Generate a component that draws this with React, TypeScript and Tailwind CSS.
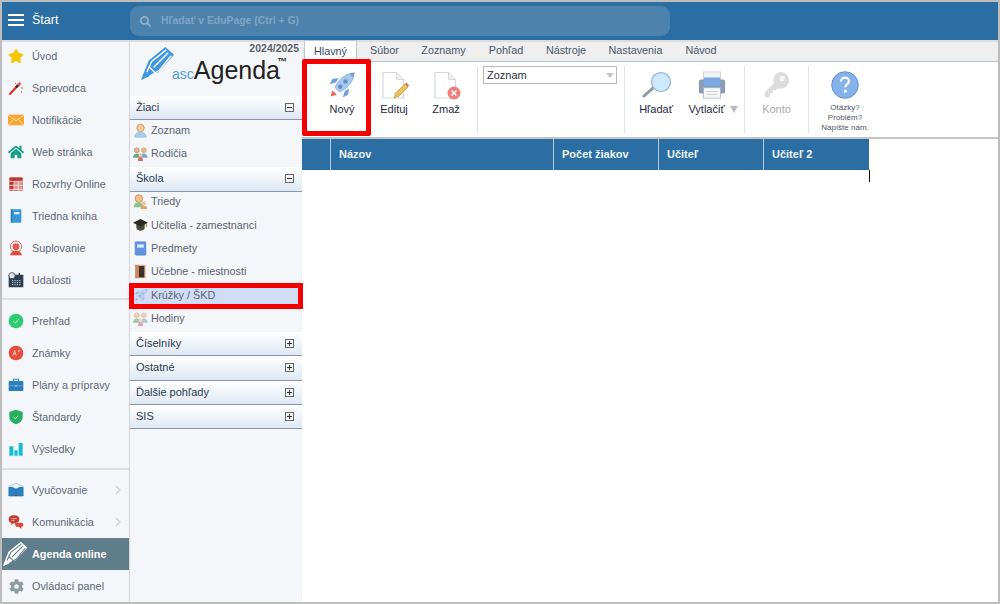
import React from 'react';
import { FaCog, FaHome, FaSearch, FaStar } from 'react-icons/fa';

const font = { fontFamily: '"Liberation Sans", Arial, sans-serif' };

// ---- sidebar icons ----
const Wand = () => (
  <svg width="16" height="16" viewBox="0 0 24 24">
    <path d="M3 21 L15 8" stroke="#d9352c" strokeWidth="3.4" strokeLinecap="round" />
    <path d="M12 11 L15 8" stroke="#2b2b2b" strokeWidth="3.4" />
    <path d="M17 2l1 3 3 1-3 1-1 3-1-3-3-1 3-1z" fill="#e8453c" />
    <circle cx="21" cy="12" r="1.2" fill="#e8453c" /><circle cx="11" cy="5" r="1" fill="#e8453c" /><circle cx="20" cy="18" r="1" fill="#e8453c" />
  </svg>
);
const Mail = () => (
  <svg width="16" height="16" viewBox="0 0 24 24">
    <rect x="0" y="4" width="24" height="16" fill="#f5a732" />
    <path d="M0 5 L12 13 L24 5 M0 20 L8 11 M24 20 L16 11" stroke="#fde6bd" strokeWidth="1.2" fill="none" />
  </svg>
);
const Timetable = () => (
  <svg width="16" height="16" viewBox="0 0 24 24">
    <rect x="2" y="2" width="20" height="20" fill="#b8362e" />
    <path d="M9 8v14M15.500 8v14M2 8h20M2 14h20M2 20h20" stroke="#f4dcda" strokeWidth="1.300" />
    <rect x="9.500" y="8.500" width="12" height="13" fill="#f7e9e7" opacity="0.55" />
  </svg>
);
const ClassBook = () => (
  <svg width="16" height="16" viewBox="0 0 24 24">
    <rect x="5" y="2" width="15" height="20" rx="1.5" fill="#3498db" />
    <rect x="4" y="2" width="2.5" height="20" fill="#2980b9" />
    <rect x="9" y="6" width="8" height="3.5" fill="#d5ecfa" />
  </svg>
);
const Substitute = () => (
  <svg width="16" height="16" viewBox="0 0 24 24">
    <circle cx="12" cy="10" r="8.5" fill="none" stroke="#e8574a" strokeWidth="1.300" />
    <circle cx="12" cy="10" r="5" fill="#e8574a" />
    <path d="M3 23c1-5 5-7 9-7s8 2 9 7z" fill="#e8453c" />
  </svg>
);
const Events = () => (
  <svg width="16" height="16" viewBox="0 0 24 24">
    <rect x="1" y="4" width="22" height="19" rx="1" fill="#2c3e50" />
    <path d="M6 13h14M6 16h14M6 19h14" stroke="#dfe6ec" strokeWidth="1.400" strokeDasharray="1.800 1.800" />
    <circle cx="6" cy="5.500" r="4.600" fill="#eef1f4" stroke="#2c3e50" strokeWidth="1.200" />
    <path d="M6 5.500l2-2" stroke="#2c3e50" strokeWidth="1" />
    <rect x="16" y="1.500" width="2" height="4" fill="#2c3e50" />
  </svg>
);
const Check = () => (
  <svg width="16" height="16" viewBox="0 0 24 24">
    <circle cx="12" cy="12" r="11" fill="#2ecc71" />
    <path d="M8 12.500l3 2.500 5-5.500" fill="none" stroke="#e9fbf0" strokeWidth="1.300" />
  </svg>
);
const Grades = () => (
  <svg width="16" height="16" viewBox="0 0 24 24">
    <circle cx="12" cy="12" r="11" fill="#e74c3c" />
    <path d="M7.500 16L10 8.500l2.500 7.500M8.500 13.500h3M15 8.500h3M16.500 7v3" fill="none" stroke="#fbe0dd" strokeWidth="1.200" />
  </svg>
);
const Briefcase = () => (
  <svg width="16" height="16" viewBox="0 0 24 24">
    <path d="M8 6V3.500h8V6" fill="none" stroke="#2a7fb8" strokeWidth="1.600" />
    <rect x="1" y="6" width="22" height="15" rx="1" fill="#2a7fb8" />
    <path d="M1 13h22" stroke="#8cc2e4" strokeWidth="0.800" />
    <circle cx="12" cy="13.500" r="1.200" fill="#d7ebf7" />
  </svg>
);
const Shield = () => (
  <svg width="16" height="16" viewBox="0 0 24 24">
    <path d="M12 1l10 3.500V12c0 5-4 9-10 11C6 21 2 17 2 12V4.500z" fill="#27ae60" />
    <path d="M8.500 12l2.500 2.500 4.500-4.500" fill="none" stroke="#e6f8ed" strokeWidth="1.300" />
  </svg>
);
const Bars = () => (
  <svg width="16" height="16" viewBox="0 0 24 24">
    <rect x="2" y="8" width="6" height="14" fill="#15bcd6" />
    <rect x="9.500" y="14" width="5" height="8" fill="#15bcd6" />
    <rect x="16" y="3" width="6" height="19" fill="#15bcd6" />
  </svg>
);
const OpenBook = () => (
  <svg width="16" height="16" viewBox="0 0 24 24">
    <path d="M12 2L1 7v14h22V7z" fill="none" stroke="#8fc1e3" strokeWidth="1.200" />
    <path d="M1 8c4-1 8 0 11 2v11c-3-2-7-2-11-1zM23 8c-4-1-8 0-11 2v11c3-2 7-2 11-1z" fill="#2a80bd" />
    <path d="M1 20.500h22" stroke="#15507d" strokeWidth="1.300" />
  </svg>
);
const Chat = () => (
  <svg width="16" height="16" viewBox="0 0 24 24">
    <path d="M10 14l8-1 2 0c2 0 3 1 3 3s-1 3-3 3v3l-4-3h-4z" fill="#d9453a" />
    <path d="M9 2c5 0 8 2 8 6s-3 6-8 6H8l-3 3v-3.500C2 12.500 1 10.500 1 8c0-4 3-6 8-6z" fill="#bf3b30" />
    <path d="M5 7h8M5 10h5" stroke="#f3cdc9" strokeWidth="1.200" />
  </svg>
);
const Pen = ({ color, slit }: { color: string; slit: string }) => (
  <svg width="100%" height="100%" viewBox="0 0 36 36">
    <path d="M1 35L9 15 26 1 35 9 19 27z" fill={color} />
    <path d="M7 27L12 16 27 4M10 31L20 25 32 10M9 21l8 8M14 22L29 7" fill="none" stroke={slit} strokeWidth="1.500" />
  </svg>
);
const Chevron = () => (
  <svg width="6" height="10" viewBox="0 0 6 10">
    <path d="M1 1l4 4-4 4" fill="none" stroke="#c9ced4" strokeWidth="1.200" />
  </svg>
);

// ---- agenda list icons ----
const Person = ({ hair = '#e0a066', body = '#a9cdf0' }: { hair?: string; body?: string }) => (
  <svg width="15" height="15" viewBox="0 0 18 18">
    <circle cx="9" cy="6" r="4.500" fill="#f2c9a5" stroke={hair} strokeWidth="1.200" />
    <path d="M2 17c0-4 3-6 7-6s7 2 7 6z" fill={body} stroke="#7fb0e0" strokeWidth="0.600" />
  </svg>
);
const Group = ({ pale = false }: { pale?: boolean }) => (
  <svg width="15" height="15" viewBox="0 0 18 18" opacity={pale ? 0.6 : 1}>
    <circle cx="4.500" cy="5" r="3" fill="#e9b88a" stroke="#8d6a4a" strokeWidth="0.500" />
    <path d="M0 14c0-3 2-5 4.500-5S9 11 9 14z" fill="#6aa57b" />
    <circle cx="13" cy="5" r="3" fill="#e9b88a" stroke="#c18b45" strokeWidth="0.500" />
    <path d="M8.500 14c0-3 2-5 4.500-5s4.500 2 4.500 5z" fill="#7da5d8" />
    <circle cx="9" cy="11" r="2.200" fill="#f0c8a5" />
    <path d="M6 18c0-3 1-4.500 3-4.500s3 1.500 3 4.500z" fill="#d96a6a" />
  </svg>
);
const Classes = () => (
  <svg width="15" height="15" viewBox="0 0 18 18">
    <circle cx="7" cy="5.500" r="4.500" fill="#f2c18f" stroke="#c6873f" strokeWidth="1" />
    <path d="M1 16c0-4 2-6 6-6s6 2 6 6z" fill="#8fc38f" />
    <circle cx="13" cy="11" r="2.600" fill="#f2c9a5" />
    <path d="M9 18c0-3 1.500-4 4-4s4 1 4 4z" fill="#e6a15e" />
  </svg>
);
const Cap = () => (
  <svg width="15" height="15" viewBox="0 0 18 18">
    <path d="M4 8v5c0 2 2.500 3.500 5 3.500s5-1.500 5-3.500V8z" fill="#4a4a3c" />
    <path d="M0 7l9-4.500L18 7l-9 4.500z" fill="#2a2a22" />
    <path d="M16 8v4" stroke="#8a6d2f" strokeWidth="1" />
  </svg>
);
const Subject = () => (
  <svg width="15" height="15" viewBox="0 0 18 18">
    <rect x="2.500" y="1" width="13" height="16" rx="1" fill="#5e93dd" stroke="#4a7cc4" strokeWidth="0.600" />
    <rect x="5" y="4" width="8" height="4" fill="#d9e8fa" />
  </svg>
);
const Door = () => (
  <svg width="15" height="15" viewBox="0 0 18 18">
    <rect x="3" y="1" width="12" height="16" fill="#d9a67e" />
    <rect x="7" y="2.500" width="6.500" height="13.500" fill="#3d2f28" />
    <path d="M3 1l4 1.500V16l-4 1z" fill="#c98a5e" stroke="#a9683f" strokeWidth="0.400" />
  </svg>
);
const Rocket = ({ size, pale = false }: { size: number; pale?: boolean }) => (
  <svg width={size} height={size} viewBox="0 0 32 32" opacity={pale ? 0.55 : 1}>
    <path d="M3 29l2-7 5 5z" fill="#e8675c" />
    <path d="M9 13L2 15l3-6 7-1zM19 23l-2 7 6-3 1-7z" fill="#6f9fd8" />
    <path d="M8 19C12 9 20 3 30 2c-1 10-7 18-17 22z" fill="#a8c9ee" stroke="#7ea6d8" strokeWidth="0.800" />
    <path d="M24 2.800c1 .5 3 2.500 5 5L30 2z" fill="#6f9fd8" />
    <circle cx="20" cy="12" r="2.500" fill="#5f90cf" />
    <circle cx="14" cy="18" r="2.500" fill="#5f90cf" />
  </svg>
);

// ---- ribbon icons ----
const Sheet = ({ children }: { children?: React.ReactNode }) => (
  <svg width="30" height="30" viewBox="0 0 30 30">
    <path d="M4 2.500h13.500l7 7V28H4z" fill="#fff" stroke="#d5d9dd" strokeWidth="1.200" />
    <path d="M17.500 2.500v7h7" fill="#eef0f2" stroke="#d5d9dd" strokeWidth="1" />
    {children}
  </svg>
);
const Lens = () => (
  <svg width="32" height="30" viewBox="0 0 32 30">
    <path d="M4 26l9-8" stroke="#8d979f" strokeWidth="3" strokeLinecap="round" />
    <circle cx="21" cy="12" r="9.500" fill="#cfe8fc" stroke="#8fb6d4" strokeWidth="1.200" />
  </svg>
);
const Printer = () => (
  <svg width="28" height="28" viewBox="0 0 30 30">
    <rect x="6" y="1" width="18" height="10" fill="#f2f3f5" stroke="#c6cbd2" strokeWidth="0.800" />
    <rect x="1" y="9" width="28" height="15" rx="2" fill="#8b9cb5" />
    <rect x="6" y="7" width="18" height="9" rx="1" fill="#7ba7e3" />
    <rect x="6" y="18" width="18" height="11" fill="#f8f9fa" stroke="#a8afba" strokeWidth="0.800" />
    <path d="M9 22h12M9 25h12" stroke="#c5cad1" strokeWidth="1" />
  </svg>
);
const Key = () => (
  <svg width="28" height="28" viewBox="0 0 28 30">
    <path d="M18 1a9 9 0 0 1 0 18c-1 0-2-.2-3-.6L12 21h-2.500v2.500H7V26l-2.500 2L0.800 28l.2-5L10.600 13c-.4-1-.6-2-.6-3a9 9 0 0 1 8-9z" fill="#dcdcdc" />
    <circle cx="19.500" cy="8" r="2.800" fill="#f6f6f6" />
  </svg>
);
const Help = () => (
  <svg width="28" height="28" viewBox="0 0 28 28">
    <circle cx="14" cy="14" r="13.300" fill="#86b2ec" stroke="#5e8dcb" strokeWidth="0.900" />
    <path d="M10 10.500c0-2.500 2-3.800 4-3.800s4 1.300 4 3.500c0 3-3.700 2.900-3.700 6" fill="none" stroke="#fff" strokeWidth="2.300" />
    <rect x="12.900" y="18.800" width="2.800" height="2.800" fill="#fff" />
  </svg>
);

type SideEntry = { label: string; icon: React.ReactNode; arrow?: boolean; active?: boolean };

const sideTop: SideEntry[] = [
  { label: 'Úvod', icon: <FaStar size={16} color="#f7c600" /> },
  { label: 'Sprievodca', icon: <Wand /> },
  { label: 'Notifikácie', icon: <Mail /> },
  { label: 'Web stránka', icon: <FaHome size={16} color="#16a085" /> },
  { label: 'Rozvrhy Online', icon: <Timetable /> },
  { label: 'Triedna kniha', icon: <ClassBook /> },
  { label: 'Suplovanie', icon: <Substitute /> },
  { label: 'Udalosti', icon: <Events /> },
];
const sideMid: SideEntry[] = [
  { label: 'Prehľad', icon: <Check /> },
  { label: 'Známky', icon: <Grades /> },
  { label: 'Plány a prípravy', icon: <Briefcase /> },
  { label: 'Štandardy', icon: <Shield /> },
  { label: 'Výsledky', icon: <Bars /> },
];
const sideBottom: SideEntry[] = [
  { label: 'Vyučovanie', icon: <OpenBook />, arrow: true },
  { label: 'Komunikácia', icon: <Chat />, arrow: true },
  { label: 'Agenda online', icon: <div className="w-[26px] h-[26px] -ml-[2px]"><Pen color="#ffffff" slit="#607d8b" /></div>, active: true },
  { label: 'Ovládací panel', icon: <FaCog size={15} color="#8d9c9c" /> },
];

const SideItem = ({ item }: { item: SideEntry }) => (
  <div className={`h-8 flex items-center ${item.active ? 'bg-[#607d8b]' : ''}`}>
    <div className="w-[30px] flex justify-center shrink-0 pr-[2px]">{item.icon}</div>
    <span className={`text-[10.8px] whitespace-nowrap ${item.active ? 'text-white font-bold' : 'text-[#5d6679]'}`}>{item.label}</span>
    {item.arrow && <span className="ml-auto mr-2 flex"><Chevron /></span>}
  </div>
);

const GroupHeader = ({ label, open }: { label: string; open?: boolean }) => (
  <div className="h-[24.4px] flex items-center pl-[6px] pr-[8px] bg-gradient-to-b from-white to-[#dfe8f3] border-b border-[#8796ae] text-[11px] text-[#2c3a4f]">
    <span className="pb-[1px]">{label}</span>
    <span className="ml-auto w-[9px] h-[9px] border border-[#666] bg-[#f4f4f4] relative">
      <span className="absolute left-[1px] right-[1px] top-[3px] h-px bg-[#333]" />
      {!open && <span className="absolute top-[1px] bottom-[1px] left-[3px] w-px bg-[#333]" />}
    </span>
  </div>
);

const ListItem = ({ label, icon, selected }: { label: string; icon: React.ReactNode; selected?: boolean }) => (
  <div className={`h-[23.4px] flex items-center relative pb-[4px] ${selected ? 'bg-[#d2dcf5]' : ''}`}>
    <div className="w-[18px] flex justify-end shrink-0">{icon}</div>
    <span className="ml-[3px] text-[10.8px] text-[#5a6373] whitespace-nowrap">{label}</span>
    {selected && <div className="absolute -left-[1px] -right-[1px] -top-[2.2px] bottom-0 border-[5px] border-[#f50000]" />}
  </div>
);

const RibbonButton = ({ label, icon, width, muted }: { label: string; icon: React.ReactNode; width: string; muted?: boolean }) => (
  <div className={`${width} flex flex-col items-center pt-[8px]`}>
    <div className="h-[30px] flex items-center justify-center">{icon}</div>
    <span className={`mt-[2px] text-[11px] leading-[14px] whitespace-nowrap ${muted ? 'text-[#a9a9a9]' : 'text-[#1f2a44]'}`}>{label}</span>
  </div>
);

const Separator = () => <div className="w-px h-[67px] mt-[4px] bg-[#dfe1e4] shrink-0" />;

const tabs = [
  { label: 'Súbor', w: 'w-[55px]' },
  { label: 'Zoznamy', w: 'w-[63px]' },
  { label: 'Pohľad', w: 'w-[62px]' },
  { label: 'Nástroje', w: 'w-[58px]' },
  { label: 'Nastavenia', w: 'w-[81px]' },
  { label: 'Návod', w: 'w-[50px]' },
];

const columns = [
  { label: '', w: 'w-[29px]' },
  { label: 'Názov', w: 'w-[223px]' },
  { label: 'Počet žiakov', w: 'w-[105px]' },
  { label: 'Učiteľ', w: 'w-[105px]' },
  { label: 'Učiteľ 2', w: 'w-[105px]' },
];

const App: React.FC = () => {
  return (
    <div style={font} className="h-[604px] w-[1000px] border-2 border-[#bdbdbd] flex flex-col overflow-hidden bg-white">
      {/* top bar */}
      <div className="h-[38px] bg-[#2b6ea3] flex items-center shrink-0">
        <div className="w-[128px] flex items-center shrink-0 pb-[2px]">
          <div className="ml-[6px] w-4 flex flex-col gap-[3px]">
            <div className="h-[2px] bg-white" />
            <div className="h-[2px] bg-white" />
            <div className="h-[2px] bg-white" />
          </div>
          <span className="ml-[8px] text-white text-[12.5px]">Štart</span>
        </div>
        <div className="w-[540px] h-[30px] rounded-[9px] bg-[#4c82ac] flex items-center pl-[10px] gap-[10px]">
          <FaSearch size={11} color="#8fb1cc" />
          <span className="text-[10.4px] text-[#7fa5c6] font-bold">Hľadať v EduPage (Ctrl + G)</span>
        </div>
      </div>

      <div className="flex flex-1 min-h-0">
        {/* left menu */}
        <div className="w-[128px] shrink-0 bg-[#f5f6fa] border-r border-[#d8d8d8] shadow-[inset_0_2px_1px_#dcdcdc]">
          {sideTop.map(i => <SideItem key={i.label} item={i} />)}
          <div className="h-[2px] mt-[2px] mb-[5px] bg-[#dddfe1]" />
          {sideMid.map(i => <SideItem key={i.label} item={i} />)}
          <div className="h-[2px] mt-[3px] mb-[4px] bg-[#dddfe1]" />
          {sideBottom.map(i => <SideItem key={i.label} item={i} />)}
        </div>

        {/* agenda panel */}
        <div className="w-[172px] shrink-0 bg-[#f5f6fa] shadow-[inset_0_2px_1px_#dcdcdc]">
          <div className="h-[56px] relative flex items-start pt-[6px] pl-[10px]">
            <div className="w-[35px] h-[35px] shrink-0"><Pen color="#3f97de" slit="#f5f6fa" /></div>
            <div className="flex items-baseline mt-[6px] -ml-[3px]">
              <span className="text-[14px] text-[#4f9fe0]">asc</span>
              <span className="text-[25px] leading-[36px] text-[#222]">Agenda</span>
            </div>
            <span className="text-[10px] font-bold leading-none mt-[11px] -ml-[3px] text-[#333]">™</span>
            <span className="absolute right-[3px] top-[2px] text-[10.5px] leading-[12px] font-bold text-[#5c5f66]">2024/2025</span>
          </div>
          <GroupHeader label="Žiaci" open />
          <ListItem label="Zoznam" icon={<Person />} />
          <ListItem label="Rodičia" icon={<Group />} />
          <GroupHeader label="Škola" open />
          <ListItem label="Triedy" icon={<Classes />} />
          <ListItem label="Učitelia - zamestnanci" icon={<Cap />} />
          <ListItem label="Predmety" icon={<Subject />} />
          <ListItem label="Učebne - miestnosti" icon={<Door />} />
          <ListItem label="Krúžky / ŠKD" icon={<Rocket size={14} pale />} selected />
          <ListItem label="Hodiny" icon={<Group pale />} />
          <GroupHeader label="Číselníky" />
          <GroupHeader label="Ostatné" />
          <GroupHeader label="Ďalšie pohľady" />
          <GroupHeader label="SIS" />
        </div>

        {/* main */}
        <div className="flex-1 min-w-0 flex flex-col">
          <div className="h-[22px] bg-[#efefef] border-b border-[#b7c8dd] flex items-end pl-[2px] text-[10.8px] text-[#4a5568] shrink-0 shadow-[inset_0_2px_1px_#dcdcdc]">
            <div className="w-[53px] h-[21px] bg-white border border-b-0 border-[#b7c8dd] flex items-center justify-center text-[#3a4a60]">Hlavný</div>
            {tabs.map(t => (
              <div key={t.label} className={`${t.w} h-[21px] flex items-center justify-center`}>{t.label}</div>
            ))}
          </div>
          <div className="h-[77px] bg-white border-b-2 border-[#c4c4c4] flex pl-[14px] shrink-0">
            <div className="relative w-[52px]">
              <RibbonButton label="Nový" width="w-[52px]" icon={<Rocket size={28} />} />
              <div className="absolute -left-[14px] -top-[3px] w-[69px] h-[77px] rounded-[2px] border-[5px] border-[#f50000]" />
            </div>
            <RibbonButton
              label="Edituj"
              width="w-[52px]"
              icon={
                <Sheet>
                  <path d="M15 28l1.500-5L26 14l3 3-9.500 9.500z" fill="#ecc35a" stroke="#a88a3a" strokeWidth="0.600" />
                  <path d="M26 14l1.500-1.500 2.500 2.500L29 17z" fill="#d9786c" />
                </Sheet>
              }
            />
            <RibbonButton
              label="Zmaž"
              width="w-[52px]"
              icon={
                <Sheet>
                  <circle cx="23" cy="23" r="6.500" fill="#ef7d7d" />
                  <path d="M20.500 20.500l5 5M25.500 20.500l-5 5" stroke="#fff" strokeWidth="1.500" />
                </Sheet>
              }
            />
            <div className="ml-[5px]"><Separator /></div>
            <div className="ml-[5px] mr-[7px] mt-[4px] w-[134px] h-[18px] border border-[#b9b9b9] flex items-center pl-[3px] pr-[2px] text-[11px] text-[#2c3140]">
              <span className="pt-px">Zoznam</span>
              <span className="ml-auto w-0 h-0 border-x-[4px] border-x-transparent border-t-[5px] border-t-[#c5c5c5]" />
            </div>
            <Separator />
            <div className="ml-[7px]"><RibbonButton label="Hľadať" width="w-[48px]" icon={<Lens />} /></div>
            <div className="w-[64px] relative">
              <RibbonButton label="Vytlačiť" width="w-[53px]" icon={<div className="ml-[11px]"><Printer /></div>} />
              <span className="absolute left-[50px] top-[44px] w-0 h-0 border-x-[4px] border-x-transparent border-t-[7px] border-t-[#b9bcc2]" />
            </div>
            <Separator />
            <RibbonButton label="Konto" width="w-[63px]" muted icon={<Key />} />
            <Separator />
            <div className="w-[72px] flex flex-col items-center pt-[9px]">
              <Help />
              <div className="mt-[4px] text-[8px] leading-[10px] text-center text-[#4d5665]">
                Otázky?<br />Problém?<br />Napíšte nám.
              </div>
            </div>
          </div>

          <div className="flex-1 min-h-0 relative">
            <div className="flex h-[31px] w-[567px] bg-[#2b6ea3]">
              {columns.map((c, i) => (
                <div
                  key={i}
                  className={`${c.w} shrink-0 flex items-center pl-[8px] text-[11px] font-bold text-[#f0f5fa] ${i < columns.length - 1 ? 'border-r border-[#b5cddf]' : ''}`}
                >
                  {c.label}
                </div>
              ))}
            </div>
            <div className="absolute left-[567px] top-[31px] w-px h-[12px] bg-black" />
          </div>
        </div>
      </div>
    </div>
  );
};

export default App;
